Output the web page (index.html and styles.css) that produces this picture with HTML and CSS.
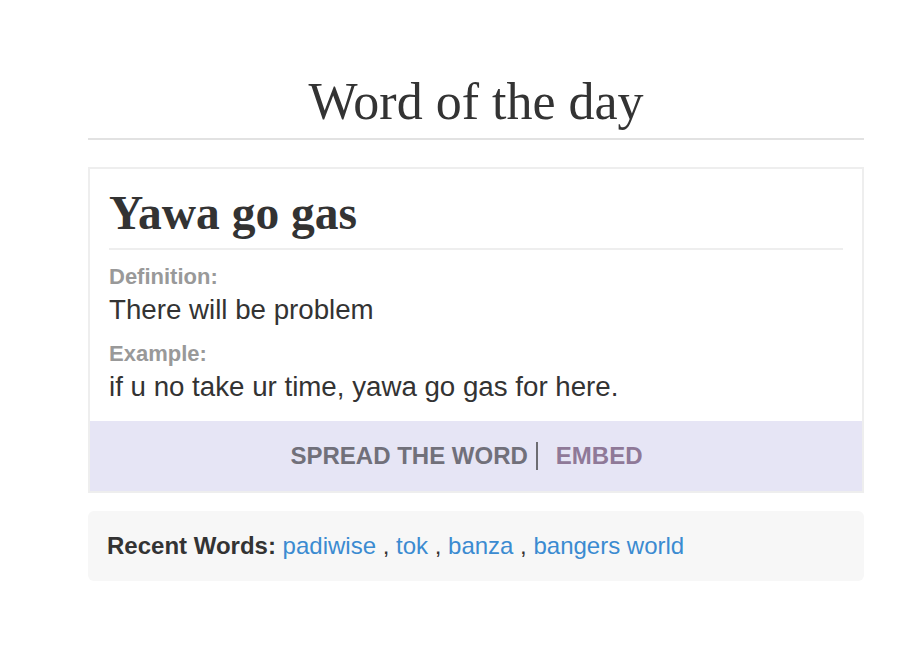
FILE: index.html
```html
<!DOCTYPE html>
<html>
<head>
<meta charset="utf-8">
<link rel="stylesheet" href="styles.css">
</head>
<body>
<div class="page">
  <h1 class="page-title">Word of the day</h1>
  <div class="card">
    <div class="card-body">
      <h2 class="word">Yawa go gas</h2>
      <div class="label">Definition:</div>
      <div class="text">There will be problem</div>
      <div class="label label-example">Example:</div>
      <div class="text">if u no take ur time, yawa go gas for here.</div>
    </div>
    <div class="card-footer">
      <a class="spread">SPREAD THE WORD</a>
      <a class="embed">EMBED</a>
    </div>
  </div>
  <div class="recent"><span class="recent-label">Recent Words:</span> <a class="recent-link">padiwise</a> , <a class="recent-link">tok</a> , <a class="recent-link">banza</a> , <a class="recent-link">bangers world</a></div>
</div>
</body>
</html>
```

FILE: styles.css
```css
html, body {
  margin: 0;
  padding: 0;
  background: #ffffff;
}
body {
  font-family: "Liberation Sans", Arial, sans-serif;
  color: #333333;
}
.page {
  width: 776px;
  margin: 0 0 0 88px;
  padding-top: 72px;
}
.page-title {
  margin: 0;
  font-family: "Liberation Serif", "Times New Roman", serif;
  font-weight: normal;
  font-size: 52px;
  line-height: 60px;
  color: #333333;
  text-align: center;
  padding-bottom: 6px;
  border-bottom: 2px solid #e2e2e2;
}
.card {
  margin-top: 27px;
  border: 2px solid #eeeeee;
  background: #ffffff;
}
.card-body {
  padding: 17px 19px 17px 19px;
}
.word {
  margin: 0;
  font-family: "Liberation Serif", "Times New Roman", serif;
  font-weight: bold;
  font-size: 47.5px;
  line-height: 55px;
  color: #333333;
  padding-bottom: 7px;
  border-bottom: 2px solid #eeeeee;
}
.label {
  margin-top: 14px;
  font-weight: bold;
  font-size: 22px;
  line-height: 26px;
  color: #999999;
}
.label-example {
  margin-top: 14px;
}
.text {
  margin-top: 3px;
  font-size: 27.7px;
  line-height: 34px;
  color: #333333;
}
.card-footer {
  display: flex;
  justify-content: center;
  align-items: center;
  height: 70px;
  padding-right: 19px;
  background: #e6e5f5;
}
.spread {
  font-weight: bold;
  font-size: 24px;
  line-height: 28px;
  color: #71707a;
  padding-right: 8px;
  border-right: 2px solid #6d6d72;
}
.embed {
  font-weight: bold;
  font-size: 24px;
  line-height: 28px;
  color: #8f7998;
  margin-left: 18px;
}
.recent {
  margin-top: 18px;
  height: 70px;
  box-sizing: border-box;
  padding: 0 19px;
  line-height: 70px;
  background: #f7f7f7;
  border-radius: 6px;
  font-size: 24px;
  color: #333333;
}
.recent-label {
  font-weight: bold;
}
.recent-link {
  color: #3b8bd1;
}
```
